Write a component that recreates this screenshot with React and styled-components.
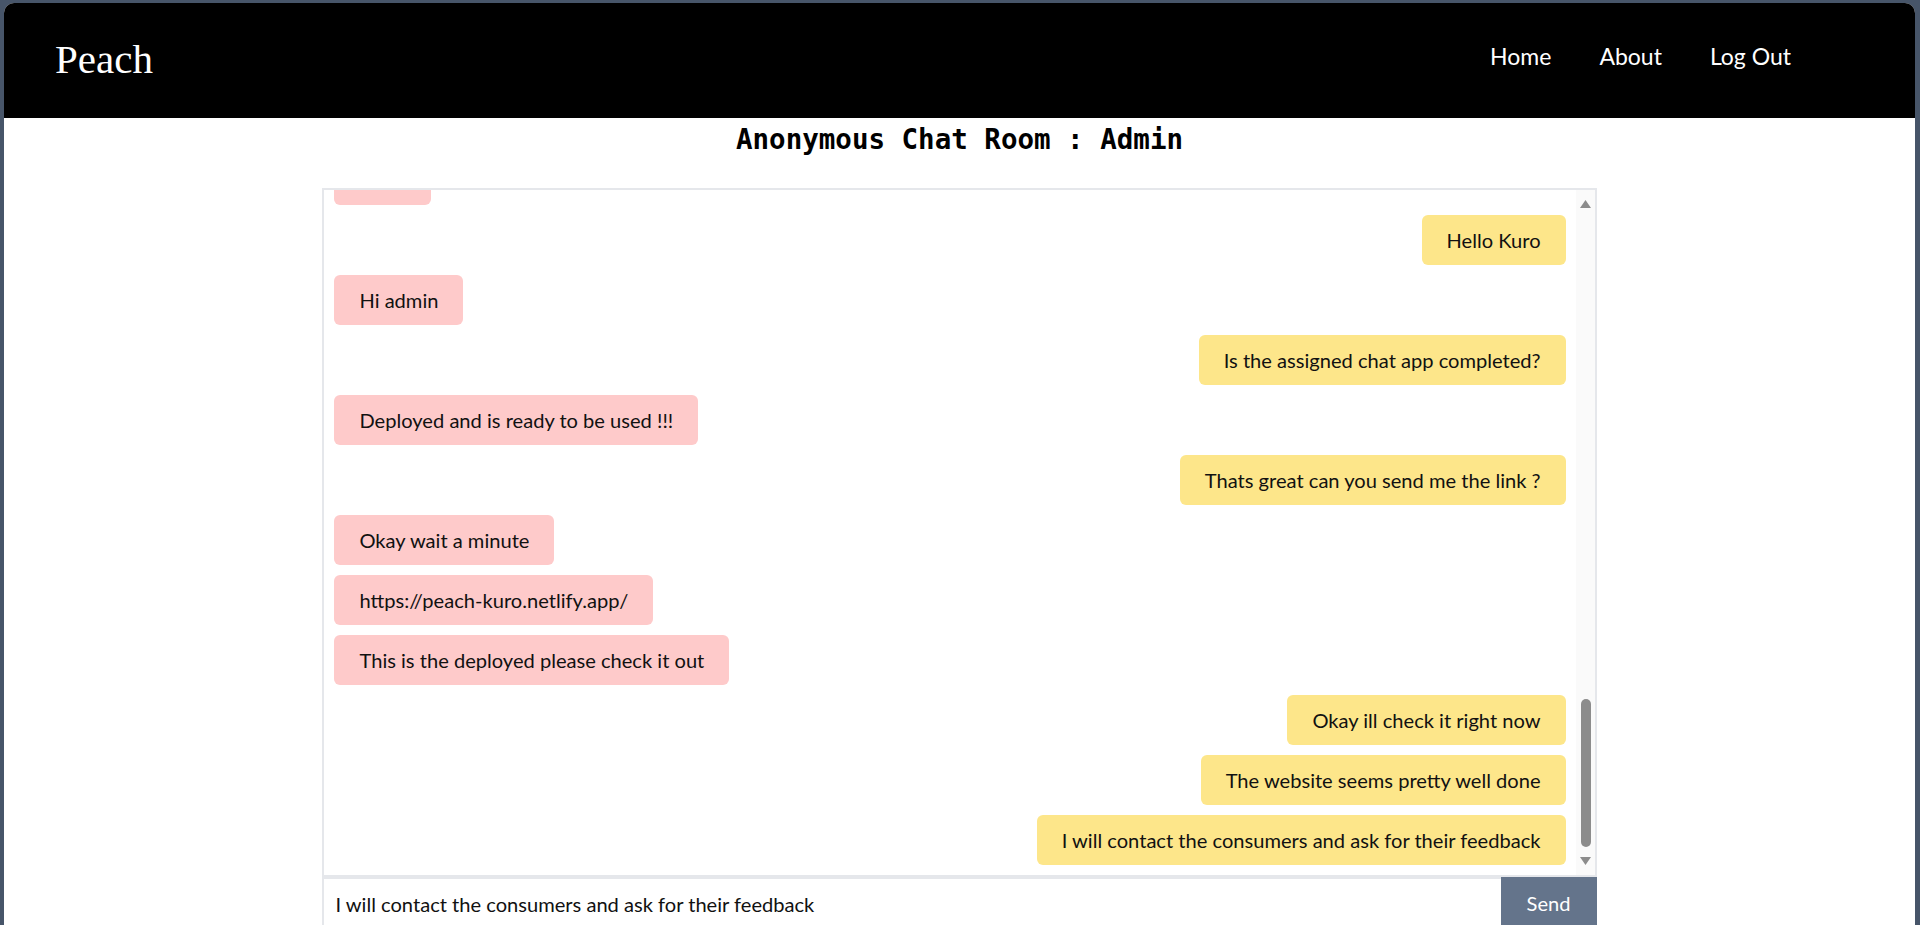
import React from 'react';
import styled, { createGlobalStyle } from 'styled-components';

const slate = '#475569';
const pink = '#fecaca';
const yellow = '#fde68a';
const line = '#e5e7eb';
const uiFont = `Lato, "Noto Sans", sans-serif`;

const GlobalStyle = createGlobalStyle`
  * { box-sizing: border-box; }
  html, body { margin: 0; height: 100%; }
  body {
    background: ${slate};
    padding: 3px 5px 0 4px;
    overflow: hidden;
    font-family: ${uiFont};
  }
  #root { height: 100%; }
`

const Page = styled.div`
  height: 100%;
  background: #fff;
  border-radius: 10px 10px 0 0;
  overflow: hidden;
  display: flex;
  flex-direction: column;
`

const Header = styled.header`
  height: 115px;
  flex-shrink: 0;
  background: #000;
  display: flex;
  justify-content: space-between;
  align-items: center;
  padding: 0 100px 0 51px;
`

const Logo = styled.span`
  font-family: "Liberation Serif", serif;
  font-size: 41px;
  color: #fff;
  margin-top: -4px;
`

const Nav = styled.nav`
  display: flex;
  margin-top: -10px;
`

const NavLink = styled.a`
  color: #fff;
  font-size: 23px;
  padding: 0 24px;
  text-decoration: none;
`

const Title = styled.h1`
  margin: 0 0 33px;
  padding-top: 5px;
  text-align: center;
  font-family: "DejaVu Sans Mono", "Liberation Mono", monospace;
  font-weight: bold;
  font-size: 27.5px;
  line-height: 32px;
  color: #000;
`

const Chat = styled.section`
  width: 66.67%;
  margin: 0 auto;
  flex: 1;
  display: flex;
  flex-direction: column;
`

const Pane = styled.div`
  height: 689px;
  border: 2px solid ${line};
  display: flex;
`

const MessageList = styled.div`
  flex: 1;
  overflow: hidden;
  display: flex;
  flex-direction: column;
  justify-content: flex-end;
  gap: 10px;
  padding: 0 10px 10px;
`

const Bubble = styled.div`
  align-self: ${p => (p.$mine ? 'flex-end' : 'flex-start')};
  flex-shrink: 0;
  background: ${p => (p.$mine ? yellow : pink)};
  color: #111;
  font-size: 20.1px;
  line-height: 26px;
  padding: 12px 25px;
  border-radius: 6px;
`

const ScrollTrack = styled.div`
  width: 19px;
  background: #fafafa;
  display: flex;
  flex-direction: column;
  align-items: center;
  padding: 10px 0 10px 1px;
`

const ThumbArea = styled.div`
  flex: 1;
  display: flex;
  flex-direction: column;
  justify-content: flex-end;
  padding-bottom: 10px;
`

const Thumb = styled.div`
  width: 10px;
  height: 148px;
  border-radius: 5px;
  background: #8c8c8c;
`

const Arrow = ({ down }) => (
  <svg width="11" height="8" viewBox="0 0 11 8" style={{ flexShrink: 0 }}>
    <path d={down ? 'M0 0 H11 L5.5 8 Z' : 'M0 8 H11 L5.5 0 Z'} fill="#8c8c8c" />
  </svg>
);

const Form = styled.form`
  display: flex;
  height: 56px;
`

const Input = styled.input`
  flex: 1;
  border: none;
  border-top: 2px solid ${line};
  border-left: 2px solid ${line};
  padding: 0 11px 4px;
  font-family: ${uiFont};
  font-size: 20.1px;
  color: #111;
  outline: none;
  background: #fff;
`

const SendButton = styled.button`
  width: 96px;
  border: none;
  background: #64748b;
  color: #fff;
  font-family: ${uiFont};
  font-size: 20.1px;
  padding: 0 0 4px;
`

const messages = [
  { text: 'Hello', mine: false },
  { text: 'Hello Kuro', mine: true },
  { text: 'Hi admin', mine: false },
  { text: 'Is the assigned chat app completed?', mine: true },
  { text: 'Deployed and is ready to be used !!!', mine: false },
  { text: 'Thats great can you send me the link ?', mine: true },
  { text: 'Okay wait a minute', mine: false },
  { text: 'https://peach-kuro.netlify.app/', mine: false },
  { text: 'This is the deployed please check it out', mine: false },
  { text: 'Okay ill check it right now', mine: true },
  { text: 'The website seems pretty well done', mine: true },
  { text: 'I will contact the consumers and ask for their feedback', mine: true },
];

const App = () => {
  return (
    <>
      <GlobalStyle />
      <Page>
        <Header>
          <Logo>Peach</Logo>
          <Nav>
            <NavLink href="#">Home</NavLink>
            <NavLink href="#">About</NavLink>
            <NavLink href="#">Log Out</NavLink>
          </Nav>
        </Header>
        <Title>Anonymous Chat Room : Admin</Title>
        <Chat>
          <Pane>
            <MessageList>
              {messages.map((m, i) => (
                <Bubble key={i} $mine={m.mine}>{m.text}</Bubble>
              ))}
            </MessageList>
            <ScrollTrack>
              <Arrow />
              <ThumbArea>
                <Thumb />
              </ThumbArea>
              <Arrow down />
            </ScrollTrack>
          </Pane>
          <Form onSubmit={e => e.preventDefault()}>
            <Input defaultValue="I will contact the consumers and ask for their feedback" />
            <SendButton type="submit">Send</SendButton>
          </Form>
        </Chat>
      </Page>
    </>
  )
}

export default App;
